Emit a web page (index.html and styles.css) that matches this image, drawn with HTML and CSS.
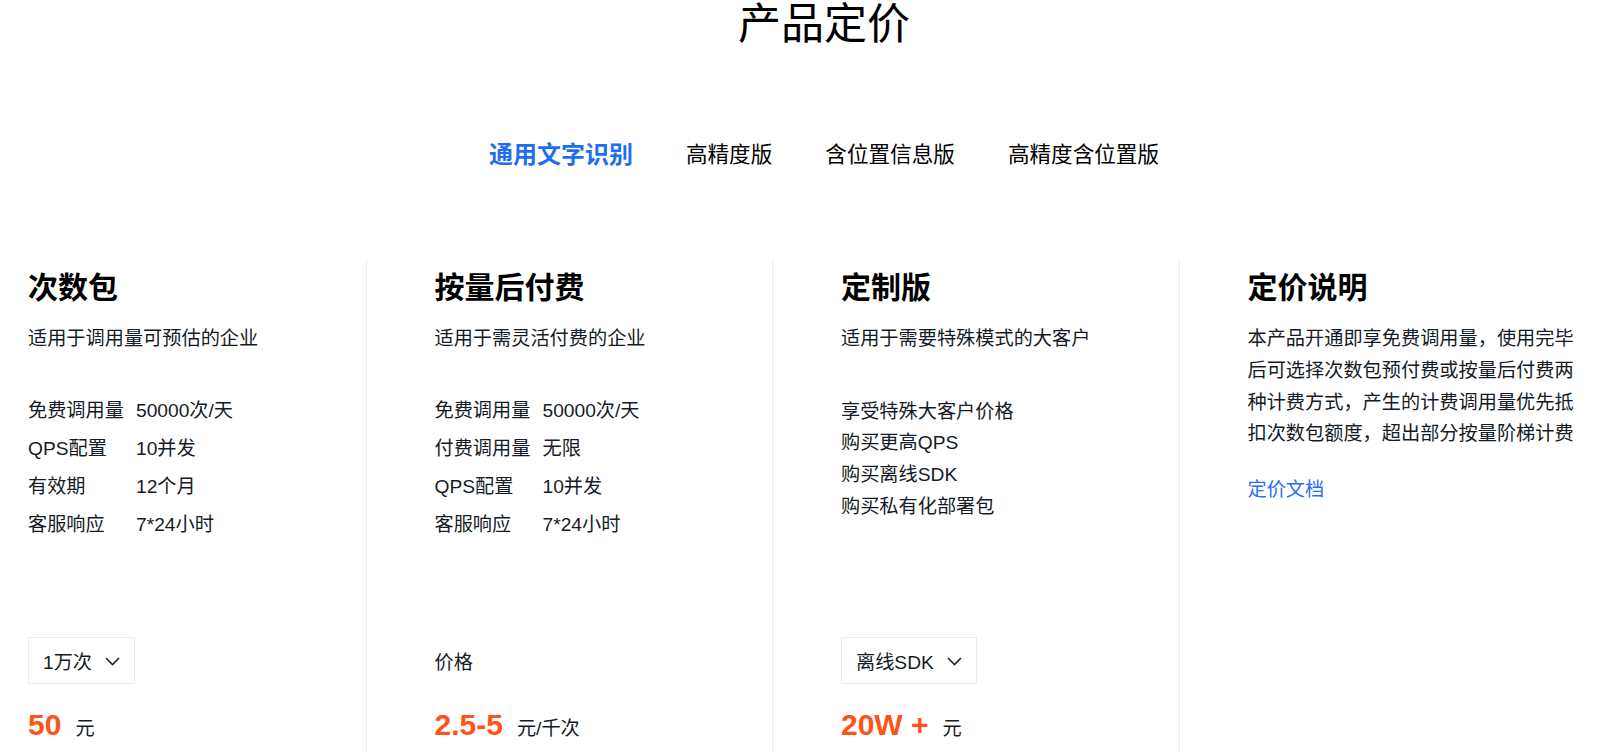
FILE: index.html
```html
<!DOCTYPE html>
<html lang="zh-CN">
<head>
<meta charset="utf-8">
<title>产品定价</title>
<link rel="stylesheet" href="styles.css">
</head>
<body>
<div class="page">
  <h1 class="title">产品定价</h1>
  <nav class="tabs">
    <span class="tab active">通用文字识别</span>
    <span class="tab">高精度版</span>
    <span class="tab">含位置信息版</span>
    <span class="tab">高精度含位置版</span>
  </nav>
  <section class="plans">
    <div class="plan">
      <h2 class="plan-name">次数包</h2>
      <p class="plan-desc">适用于调用量可预估的企业</p>
      <dl class="specs">
        <dt>免费调用量</dt><dd>50000次/天</dd>
        <dt>QPS配置</dt><dd>10并发</dd>
        <dt>有效期</dt><dd>12个月</dd>
        <dt>客服响应</dt><dd>7*24小时</dd>
      </dl>
      <div class="plan-bottom">
        <div class="select"><span>1万次</span><svg class="chev" width="15" height="9" viewBox="0 0 15 9"><polyline points="1,1 7.5,7.5 14,1" fill="none" stroke="#222" stroke-width="1.6"/></svg></div>
        <div class="price"><span class="amount">50</span><span class="unit">元</span></div>
      </div>
    </div>
    <div class="plan">
      <h2 class="plan-name">按量后付费</h2>
      <p class="plan-desc">适用于需灵活付费的企业</p>
      <dl class="specs">
        <dt>免费调用量</dt><dd>50000次/天</dd>
        <dt>付费调用量</dt><dd>无限</dd>
        <dt>QPS配置</dt><dd>10并发</dd>
        <dt>客服响应</dt><dd>7*24小时</dd>
      </dl>
      <div class="plan-bottom">
        <div class="price-label">价格</div>
        <div class="price"><span class="amount">2.5-5</span><span class="unit">元/千次</span></div>
      </div>
    </div>
    <div class="plan">
      <h2 class="plan-name">定制版</h2>
      <p class="plan-desc">适用于需要特殊模式的大客户</p>
      <ul class="perks">
        <li>享受特殊大客户价格</li>
        <li>购买更高QPS</li>
        <li>购买离线SDK</li>
        <li>购买私有化部署包</li>
      </ul>
      <div class="plan-bottom">
        <div class="select"><span>离线SDK</span><svg class="chev" width="15" height="9" viewBox="0 0 15 9"><polyline points="1,1 7.5,7.5 14,1" fill="none" stroke="#222" stroke-width="1.6"/></svg></div>
        <div class="price"><span class="amount">20W +</span><span class="unit">元</span></div>
      </div>
    </div>
    <div class="plan">
      <h2 class="plan-name">定价说明</h2>
      <p class="plan-note">本产品开通即享免费调用量，使用完毕后可选择次数包预付费或按量后付费两种计费方式，产生的计费调用量优先抵扣次数包额度，超出部分按量阶梯计费</p>
      <a class="doc-link" href="#">定价文档</a>
    </div>
  </section>
</div>
</body>
</html>
```

FILE: styles.css
```css
html, body {
  margin: 0;
  padding: 0;
  overflow: hidden;
  background: #fff;
}

body {
  font-family: "Liberation Sans", "Noto Sans CJK SC", sans-serif;
  color: #151b26;
  font-size: 19.2px;
}

.page {
  width: 1648px;
}

.title {
  margin: 0;
  font-size: 43px;
  font-weight: normal;
  line-height: 48px;
  text-align: center;
  color: #000;
}

.tabs {
  margin-top: 90px;
  height: 34px;
  display: flex;
  justify-content: center;
  align-items: center;
  gap: 53px;
}

.tab {
  font-size: 21.6px;
  line-height: 34px;
  color: #000;
  white-space: nowrap;
}

.tab.active {
  font-size: 24px;
  font-weight: bold;
  color: #1f6ef0;
}

.plans {
  margin-top: 87px;
  margin-left: -41px;
  display: grid;
  grid-template-columns: repeat(4, 406.5px);
}

.plan {
  box-sizing: border-box;
  height: 541px;
  padding: 8px 0 53px 68px;
  border-left: 1px solid #eeeeee;
  display: flex;
  flex-direction: column;
}

.plan-name {
  margin: 0;
  font-size: 30px;
  line-height: 42px;
  font-weight: bold;
  color: #000;
}

.plan-desc {
  margin: 14px 0 0;
  line-height: 32px;
}

.specs {
  margin: 37px 0 0;
  display: grid;
  grid-template-columns: 108px auto;
  grid-auto-rows: 38px;
  align-items: center;
}

.specs dt,
.specs dd {
  margin: 0;
  line-height: 38px;
  white-space: nowrap;
}

.perks {
  margin: 40.5px 0 0;
  padding: 0;
  list-style: none;
}

.perks li {
  line-height: 31.7px;
}

.plan-note {
  margin: 14px 0 0;
  line-height: 31.8px;
}

.doc-link {
  margin-top: 24px;
  line-height: 32px;
  color: #2b6cf0;
  text-decoration: none;
  align-self: flex-start;
}

.plan-bottom {
  margin-top: auto;
  display: flex;
  flex-direction: column;
  align-items: flex-start;
}

.select {
  box-sizing: border-box;
  height: 47px;
  display: inline-flex;
  align-items: center;
  gap: 13px;
  padding: 0 14px 0 14px;
  border: 1px solid #ebebeb;
  white-space: nowrap;
}

.chev {
  display: block;
  margin-top: 1px;
}

.price-label {
  height: 47px;
  display: flex;
  align-items: center;
}

.price {
  margin-top: 21px;
  height: 42px;
  display: flex;
  align-items: baseline;
  gap: 14px;
  white-space: nowrap;
}

.amount {
  font-size: 30px;
  line-height: 40px;
  font-weight: bold;
  color: #ff5216;
}

.unit {
  font-size: 19.2px;
  line-height: 40px;
}
```
